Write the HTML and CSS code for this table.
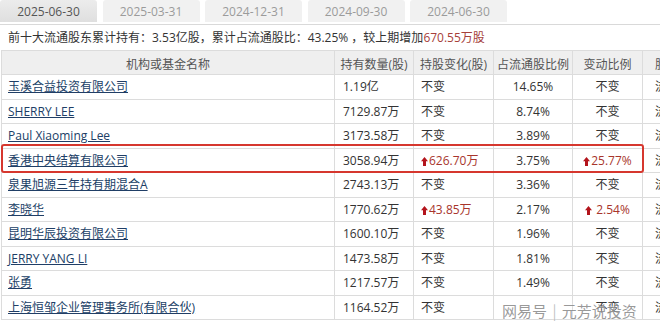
FILE: index.html
```html
<!DOCTYPE html>
<html lang="zh-CN">
<head>
<meta charset="utf-8">
<title>前十大流通股东</title>
<link rel="stylesheet" href="styles.css">
</head>
<body>
<div class="board">
  <div class="tabs">
    <div class="tab active">2025-06-30</div>
    <div class="tab">2025-03-31</div>
    <div class="tab">2024-12-31</div>
    <div class="tab">2024-09-30</div>
    <div class="tab">2024-06-30</div>
  </div>
  <div class="summary">前十大流通股东累计持有：3.53亿股，累计占流通股比：43.25% ，较上期增加<span class="red">670.55万股</span></div>
  <table class="holders">
    <thead>
      <tr>
        <th class="c-name">机构或基金名称</th>
        <th class="c-qty">持有数量(股)</th>
        <th class="c-chg">持股变化(股)</th>
        <th class="c-pct">占流通股比例</th>
        <th class="c-var">变动比例</th>
        <th class="c-type">股份类型</th>
      </tr>
    </thead>
    <tbody>
      <tr><td class="c-name"><a href="#">玉溪合益投资有限公司</a></td><td class="c-qty">1.19亿</td><td class="c-chg">不变</td><td class="c-pct">14.65%</td><td class="c-var">不变</td><td class="c-type">流通A股</td></tr>
      <tr><td class="c-name"><a href="#">SHERRY LEE</a></td><td class="c-qty">7129.87万</td><td class="c-chg">不变</td><td class="c-pct">8.74%</td><td class="c-var">不变</td><td class="c-type">流通A股</td></tr>
      <tr><td class="c-name"><a href="#">Paul Xiaoming Lee</a></td><td class="c-qty">3173.58万</td><td class="c-chg">不变</td><td class="c-pct">3.89%</td><td class="c-var">不变</td><td class="c-type">流通A股</td></tr>
      <tr><td class="c-name"><a href="#">香港中央结算有限公司</a></td><td class="c-qty">3058.94万</td><td class="c-chg up"><svg class="arrow" width="7" height="9" viewBox="0 0 7 9"><path d="M3.5 0L7 4.2H5V9H2V4.2H0Z"/></svg>626.70万</td><td class="c-pct">3.75%</td><td class="c-var up"><svg class="arrow" width="7" height="9" viewBox="0 0 7 9"><path d="M3.5 0L7 4.2H5V9H2V4.2H0Z"/></svg>25.77%</td><td class="c-type">流通A股</td></tr>
      <tr><td class="c-name"><a href="#">泉果旭源三年持有期混合A</a></td><td class="c-qty">2743.13万</td><td class="c-chg">不变</td><td class="c-pct">3.36%</td><td class="c-var">不变</td><td class="c-type">流通A股</td></tr>
      <tr><td class="c-name"><a href="#">李晓华</a></td><td class="c-qty">1770.62万</td><td class="c-chg up"><svg class="arrow" width="7" height="9" viewBox="0 0 7 9"><path d="M3.5 0L7 4.2H5V9H2V4.2H0Z"/></svg>43.85万</td><td class="c-pct">2.17%</td><td class="c-var up"><svg class="arrow" width="7" height="9" viewBox="0 0 7 9"><path d="M3.5 0L7 4.2H5V9H2V4.2H0Z"/></svg> 2.54%</td><td class="c-type">流通A股</td></tr>
      <tr><td class="c-name"><a href="#">昆明华辰投资有限公司</a></td><td class="c-qty">1600.10万</td><td class="c-chg">不变</td><td class="c-pct">1.96%</td><td class="c-var">不变</td><td class="c-type">流通A股</td></tr>
      <tr><td class="c-name"><a href="#">JERRY YANG LI</a></td><td class="c-qty">1473.58万</td><td class="c-chg">不变</td><td class="c-pct">1.81%</td><td class="c-var">不变</td><td class="c-type">流通A股</td></tr>
      <tr><td class="c-name"><a href="#">张勇</a></td><td class="c-qty">1217.57万</td><td class="c-chg">不变</td><td class="c-pct">1.49%</td><td class="c-var">不变</td><td class="c-type">流通A股</td></tr>
      <tr><td class="c-name"><a href="#">上海恒邹企业管理事务所(有限合伙)</a></td><td class="c-qty">1164.52万</td><td class="c-chg">不变</td><td class="c-pct"></td><td class="c-var">不变</td><td class="c-type">流通A股</td></tr>
    </tbody>
  </table>
  <div class="highlight"></div>
  <div class="watermark">网易号 <span class="sep">|</span> 元芳说投资</div>
</div>
</body>
</html>
```
FILE: styles.css
```css
html, body {
  margin: 0;
  padding: 0;
  background: #fff;
}
body {
  width: 660px;
  height: 330px;
  overflow: hidden;
  font-family: "Open Sans", "Noto Sans CJK SC", sans-serif;
  font-size: 12px;
  color: #333;
}
.board {
  position: relative;
  width: 660px;
  height: 330px;
}
.tabs {
  display: flex;
  gap: 5.5px;
  align-items: flex-start;
  height: 24px;
  border-bottom: 1px solid #d9d9d9;
}
.tab {
  flex: 0 0 97px;
  height: 20px;
  padding-top: 2px;
  line-height: 20px;
  text-align: center;
  background: #f1f1f1;
  color: #9b9b9b;
  border-radius: 3px 3px 0 0;
}
.tab.active {
  background: linear-gradient(#ececec, #dfdfdf);
  color: #555;
}
.summary {
  height: 25px;
  line-height: 25px;
  padding-left: 8px;
  color: #333;
  white-space: nowrap;
}
.red {
  color: #a6403a;
}
.holders {
  border-collapse: separate;
  border-spacing: 0;
  table-layout: fixed;
  width: 722px;
  margin-left: 1px;
}
.holders th,
.holders td {
  box-sizing: border-box;
  border-right: 1px solid #dcdcdc;
  border-bottom: 1px solid #dcdcdc;
  padding: 0 8px;
  white-space: nowrap;
  overflow: hidden;
}
.holders th:first-child,
.holders td:first-child {
  border-left: 1px solid #dcdcdc;
}
.holders th {
  height: 25px;
  padding: 2px 0 0;
  border-top: 1px solid #dcdcdc;
  background: #efefef;
  font-weight: normal;
  color: #555;
  text-align: center;
}
.holders td {
  height: 24.5px;
  line-height: 16px;
  padding-top: 1px;
}
.holders .c-name { width: 334px; }
.holders .c-qty { width: 79px; }
.holders .c-chg { width: 80px; }
.holders .c-pct { width: 79px; }
.holders .c-var { width: 70px; }
.holders .c-type { width: 80px; }
.holders td.c-name { padding-left: 6px; }
.holders td.c-chg { padding-left: 7px; }
.holders td.c-pct,
.holders td.c-var { text-align: center; padding: 1px 0 0; }
.holders td.c-type { padding-left: 12px; }
.holders th.c-type { text-align: left; padding-left: 12px; }
.holders a {
  color: #203e66;
  text-decoration: underline;
}
.holders td.up {
  color: #a8352c;
}
.arrow {
  display: inline-block;
  vertical-align: -1px;
  margin-right: 1px;
  fill: #b3141c;
}
.highlight {
  position: absolute;
  left: 1px;
  top: 144px;
  width: 643px;
  height: 29px;
  box-sizing: border-box;
  border: 2px solid #d6372e;
  border-radius: 3px;
  pointer-events: none;
}
.watermark {
  position: absolute;
  left: 502px;
  top: 300px;
  font-family: "Noto Sans CJK SC", sans-serif;
  font-size: 15px;
  line-height: 22px;
  color: rgba(120, 120, 120, 0.75);
  text-shadow: 0 0 2px #fff;
  white-space: nowrap;
}
.watermark .sep {
  color: rgba(150, 150, 150, 0.6);
  margin: 0 2px;
}
```
